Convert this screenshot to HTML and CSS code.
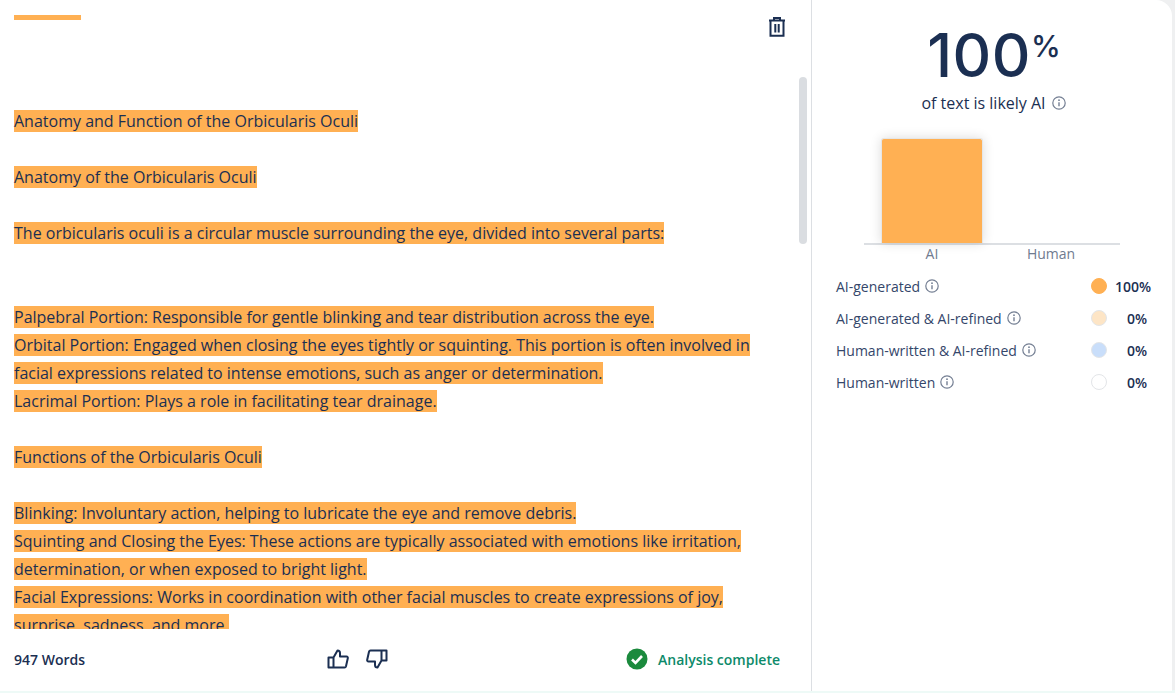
FILE: index.html
```html
<!DOCTYPE html>
<html lang="en">
<head>
<meta charset="utf-8">
<title>AI detector result</title>
<link rel="stylesheet" href="styles.css">
</head>
<body>
<main class="card">
  <section class="doc">
    <header class="doc-head">
      <div class="accent"></div>
      <button class="trash" aria-label="Delete">
        <svg viewBox="0 0 18 20" width="18" height="20" fill="none" stroke="#1b2f52" stroke-width="2"><path d="M1 3.500h16M6 3V1h6v2M2.500 4v14.800h13V4M7.300 7v8.500M10.700 7v8.500"/></svg>
      </button>
    </header>
    <div class="scroll">
      <div class="text">
        <p class="line"><mark>Anatomy and Function of the Orbicularis Oculi</mark></p>
        <p class="line blank"></p>
        <p class="line"><mark>Anatomy of the Orbicularis Oculi</mark></p>
        <p class="line blank"></p>
        <p class="line"><mark>The orbicularis oculi is a circular muscle surrounding the eye, divided into several parts:</mark></p>
        <p class="line blank"></p>
        <p class="line blank"></p>
        <p class="line"><mark>Palpebral Portion: Responsible for gentle blinking and tear distribution across the eye.</mark></p>
        <p class="line"><mark>Orbital Portion: Engaged when closing the eyes tightly or squinting. This portion is often involved in facial expressions related to intense emotions, such as anger or determination.</mark></p>
        <p class="line"><mark>Lacrimal Portion: Plays a role in facilitating tear drainage.</mark></p>
        <p class="line blank"></p>
        <p class="line"><mark>Functions of the Orbicularis Oculi</mark></p>
        <p class="line blank"></p>
        <p class="line"><mark>Blinking: Involuntary action, helping to lubricate the eye and remove debris.</mark></p>
        <p class="line"><mark>Squinting and Closing the Eyes: These actions are typically associated with emotions like irritation, determination, or when exposed to bright light.</mark></p>
        <p class="line"><mark>Facial Expressions: Works in coordination with other facial muscles to create expressions of joy, surprise, sadness, and more.</mark></p>
      </div>
      <div class="scrollbar"></div>
    </div>
    <footer class="doc-foot">
      <span class="words">947 Words</span>
      <div class="votes">
        <svg viewBox="0 0 22 20" width="22" height="20" fill="none" stroke="#1b2f52" stroke-width="2" stroke-linejoin="round"><path d="M6.500 8.500H1.500v10h5zM6.500 8.500l4-7c1.500 0 2.500 1 2.500 2.500v3.500h6.500c1 0 1.500.8 1.300 1.700l-1.800 8c-.2.800-.8 1.300-1.500 1.300H6.500"/></svg>
        <svg viewBox="0 0 22 20" width="22" height="20" fill="none" stroke="#1b2f52" stroke-width="2" stroke-linejoin="round"><path d="M15.500 11.500h5v-10h-5zM15.500 11.500l-4 7c-1.500 0-2.500-1-2.500-2.500v-3.500H2.500c-1 0-1.500-.8-1.300-1.700l1.800-8c.2-.800.8-1.300 1.500-1.300h11"/></svg>
      </div>
      <div class="status">
        <svg viewBox="0 0 22 22" width="22" height="22"><circle cx="11" cy="11" r="10.500" fill="#1b8a3d"/><path d="M6 11.500l3.500 3.500 6.500-7" fill="none" stroke="#fff" stroke-width="2.600"/></svg>
        <span>Analysis complete</span>
      </div>
    </footer>
  </section>
  <aside class="side">
    <div class="score"><span class="num">100</span><span class="pct">%</span></div>
    <div class="sub">of text is likely AI
      <svg class="info" viewBox="0 0 14 14" width="14" height="14"><use href="#i"/></svg>
    </div>
    <div class="chart">
      <div class="plot"><div class="bar"></div></div>
      <div class="labels"><span>AI</span><span>Human</span></div>
    </div>
    <ul class="legend">
      <li class="row"><span class="name">AI-generated <svg class="info" viewBox="0 0 14 14" width="14" height="14"><use href="#i"/></svg></span><span class="dot d1"></span><span class="val">100%</span></li>
      <li class="row"><span class="name">AI-generated &amp; AI-refined <svg class="info" viewBox="0 0 14 14" width="14" height="14"><use href="#i"/></svg></span><span class="dot d2"></span><span class="val">0%</span></li>
      <li class="row"><span class="name">Human-written &amp; AI-refined <svg class="info" viewBox="0 0 14 14" width="14" height="14"><use href="#i"/></svg></span><span class="dot d3"></span><span class="val">0%</span></li>
      <li class="row"><span class="name">Human-written <svg class="info" viewBox="0 0 14 14" width="14" height="14"><use href="#i"/></svg></span><span class="dot d4"></span><span class="val">0%</span></li>
    </ul>
  </aside>
</main>
<svg class="defs" width="0" height="0"><symbol id="i" viewBox="0 0 14 14"><circle cx="7" cy="7" r="6.200" fill="none" stroke="#747f93" stroke-width="1.200"/><path d="M7 6.300v4" stroke="#747f93" stroke-width="1.400"/><circle cx="7" cy="4.200" r=".9" fill="#747f93"/></symbol></svg>
</body>
</html>
```
FILE: styles.css
```css
* { box-sizing: border-box; }
html, body { height: 100%; }
body {
  margin: 0;
  background: linear-gradient(#eff0f1 0, #eff0f1 690px, #eefaf7 690px);
  font-family: "Open Sans", "Noto Sans", sans-serif;
  color: #1b2f52;
  overflow: hidden;
}
.card {
  display: flex;
  width: 1172px;
  height: 691px;
  background: #fff;
  border-radius: 0 16px 0 0;
}
.doc {
  width: 812px;
  flex: none;
  display: flex;
  flex-direction: column;
  border-right: 1px solid #dcdfe3;
}
.doc-head {
  display: flex;
  justify-content: space-between;
  align-items: flex-start;
  height: 77px;
  padding: 15px 25px 0 14px;
  flex: none;
}
.accent { width: 67px; height: 5px; background: #ffb053; }
.trash { border: 0; background: none; padding: 0; margin-top: 2px; height: 20px; }
.scroll {
  flex: none;
  height: 552px;
  display: flex;
  overflow: hidden;
  padding-left: 14px;
}
.text { width: 760px; flex: none; padding-top: 30px; }
.line { margin: 0; font-size: 16px; line-height: 28px; }
.blank { height: 28px; }
mark { background: #ffb053; color: #1b2f52; }
.scrollbar {
  width: 8px;
  height: 167px;
  margin-left: 25px;
  background: #dadde1;
  border-radius: 4px;
}
.doc-foot {
  flex: 1;
  display: flex;
  align-items: center;
  padding: 0 30px 2px 14px;
  font-size: 14px;
}
.words { font-weight: 600; width: 313px; }
.votes { display: flex; gap: 17px; width: 299px; }
.status { display: flex; align-items: center; gap: 10px; color: #0d8a6a; font-weight: 600; white-space: nowrap; }
.side { flex: 1; padding: 0 21px 0 24px; }
.score {
  display: flex;
  justify-content: center;
  height: 92px;
  padding-top: 15px;
  padding-left: 1px;
  font-family: Inter, sans-serif;
  font-weight: 500;
}
.num { font-size: 60px; line-height: 80px; letter-spacing: .5px; }
.pct { font-size: 30px; line-height: 62px; font-weight: 500; }
.sub { display: flex; align-items: center; justify-content: center; gap: 6px; font-size: 16px; line-height: 22px; height: 22px; }
.chart { margin: 21px 31px 0 28px; }
.plot { height: 110px; border-bottom: 2px solid #dcdfe3; padding: 0 0 0 17px; display: flex; align-items: flex-end; }
.bar {
  width: 102px;
  height: 105px;
  background: #ffb053;
  border: 1px solid #e6e6e6;
  border-bottom: 0;
  border-radius: 3px 3px 0 0;
  box-shadow: 0 0 12px rgba(0, 0, 0, .14);
}
.labels { display: flex; font-size: 14px; line-height: 17px; color: #6f7b8f; }
.labels span:first-child { margin-left: 18px; width: 100px; text-align: center; }
.labels span:last-child { margin-left: 19px; width: 100px; text-align: center; }
.legend { list-style: none; margin: 8px 0 0; padding: 0; }
.row { display: flex; align-items: center; height: 32px; font-size: 14px; }
.name { flex: 1; display: flex; align-items: center; gap: 5px; white-space: nowrap; color: #34466a; }
.dot { width: 16px; height: 16px; border-radius: 50%; border: 1px solid #e3e5e8; }
.d1 { background: #ffb053; border-color: #ffb053; }
.d2 { background: #fde5c6; }
.d3 { background: #c9defa; }
.d4 { background: #fff; }
.val { width: 44px; text-align: right; font-weight: 600; font-size: 14px; }
.row:not(:first-child) .val { padding-right: 4px; }
.info { flex: none; }
.defs { position: absolute; }
```
